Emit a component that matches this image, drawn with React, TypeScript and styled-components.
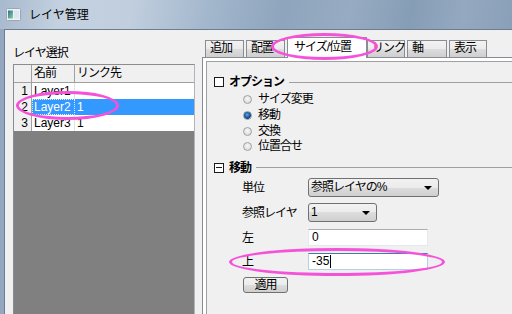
import React from "react";
import styled, { createGlobalStyle, css } from "styled-components";

const Global = createGlobalStyle`
  html, body { margin: 0; padding: 0; background: #f0f0f0; }
  body {
    font-family: "Liberation Sans", "Noto Sans CJK JP", sans-serif;
    font-size: 12px;
    color: #000;
  }
  * { box-sizing: border-box; }
`;

const jp = css`
  letter-spacing: -1px;
`;

const Window = styled.div`
  position: relative;
  width: 512px;
  height: 314px;
  overflow: hidden;
  display: flex;
  flex-direction: column;
  background: #93a8c0;
`;

const TitleBar = styled.div`
  flex: none;
  height: 29px;
  display: flex;
  align-items: center;
  gap: 8px;
  padding-left: 6px;
  background: linear-gradient(
    100deg,
    #a7b9cd 0%,
    #c3d1e0 12%,
    #c0cede 26%,
    #a4b8cd 40%,
    #8ea5bd 55%,
    #97acc2 68%,
    #869db6 80%,
    #94a9c0 90%,
    #8aa0b8 100%
  );
`;

const TitleText = styled.span`
  font-size: 12px;
  line-height: 14px;
  padding-top: 1px;
`;

const Frame = styled.div`
  flex: 1;
  min-height: 0;
  display: flex;
  padding-left: 4px;
`;

const Body = styled.div`
  flex: 1;
  min-width: 0;
  display: flex;
  background: #f0f0f0;
  border-top: 1px solid #6d7d90;
  border-left: 1px solid #6d7d90;
`;

const LeftPane = styled.div`
  flex: none;
  width: 190px;
  display: flex;
  flex-direction: column;
  padding: 16px 0 0 8px;
`;

const PaneLabel = styled.div`
  height: 14px;
  line-height: 14px;
  margin-bottom: 4px;
  ${jp}
`;

const Grid = styled.div`
  flex: 1;
  width: 182px;
  display: flex;
  flex-direction: column;
  background: #808080;
  border: 1px solid #8c8c8c;
  border-right-color: #b4b4b4;
  border-bottom: none;
`;

const GridRow = styled.div<{ $head?: boolean }>`
  display: grid;
  grid-template-columns: 18px 43px 1fr;
  height: ${(p) => (p.$head ? 18 : 16)}px;
  background: #fff;
  ${(p) =>
    p.$head &&
    css`
      background: #f0f0f0;
      border-bottom: 1px solid #a0a0a0;
    `}
`;

const HeadCell = styled.div<{ $last?: boolean }>`
  line-height: 17px;
  padding-left: 2px;
  border-right: ${(p) => (p.$last ? "none" : "1px solid #a0a0a0")};
  ${jp}
`;

const NumCell = styled.div`
  background: #f0f0f0;
  border-right: 1px solid #a0a0a0;
  text-align: right;
  padding-right: 3px;
  line-height: 16px;
`;

const DataCell = styled.div<{ $sel?: boolean; $focus?: boolean; $sep?: boolean }>`
  line-height: 16px;
  padding-left: 2px;
  white-space: nowrap;
  border-right: ${(p) => (p.$sep ? "1px solid #e2e2e2" : "none")};
  ${(p) =>
    p.$sel &&
    css`
      background: #3399ff;
      color: #fff;
    `}
  ${(p) =>
    p.$focus &&
    css`
      outline: 1px dotted #dfeeff;
      outline-offset: -1px;
    `}
`;

const RightPane = styled.div`
  flex: 1;
  min-width: 0;
  display: flex;
  flex-direction: column;
  margin-left: 7px;
  padding-top: 7px;
`;

const TabStrip = styled.div`
  position: relative;
  z-index: 1;
  height: 20px;
  display: flex;
  align-items: flex-end;
  padding-left: 3px;
`;

const Tab = styled.div<{ $w: number; $active?: boolean; $gap?: number }>`
  position: relative;
  flex: none;
  width: ${(p) => p.$w}px;
  height: 17px;
  margin-right: ${(p) => p.$gap ?? 2}px;
  padding-left: 4px;
  line-height: 15px;
  border: 1px solid #898c95;
  border-bottom: none;
  background: linear-gradient(#f2f2f2 0%, #ebebeb 50%, #dddddd 50%, #cfcfcf 100%);
  white-space: nowrap;
  ${jp}
  ${(p) =>
    p.$active &&
    css`
      height: 21px;
      margin-bottom: -1px;
      padding-left: 6px;
      padding-top: 2px;
      background: #fff;
      z-index: 2;
    `}
`;

const Panel = styled.div`
  flex: 1;
  display: flex;
  flex-direction: column;
  background: #fff;
  border-top: 1px solid #898c95;
  border-left: 1px solid #898c95;
  padding: 3px 0 0 3px;
`;

const TreeBox = styled.div`
  flex: 1;
  display: flex;
  flex-direction: column;
  background: #f0f0f0;
  border-top: 1px solid #a0a0a0;
  border-left: 1px solid #a0a0a0;
  padding: 12px 0 0 7px;
`;

const SectionHeader = styled.div<{ $mt?: number }>`
  height: 16px;
  margin-top: ${(p) => p.$mt ?? 0}px;
  display: flex;
  align-items: center;
`;

const Toggle = styled.div<{ $open?: boolean }>`
  position: relative;
  flex: none;
  width: 10px;
  height: 10px;
  border: 1px solid #1a1a1a;
  background: #fff;
  &::after {
    content: "";
    display: ${(p) => (p.$open ? "block" : "none")};
    position: absolute;
    left: 1px;
    top: 3px;
    width: 6px;
    height: 1px;
    background: #1a1a1a;
  }
`;

const SectionTitle = styled.span`
  margin-left: 5px;
  font-weight: bold;
  line-height: 16px;
  ${jp}
`;

const SectionRule = styled.div`
  flex: 1;
  height: 1px;
  margin-left: 5px;
  background: #a0a0a0;
`;

const RadioList = styled.div`
  display: flex;
  flex-direction: column;
  margin-top: 2px;
  padding-left: 29px;
`;

const RadioRow = styled.div`
  height: 15.67px;
  display: flex;
  align-items: center;
  gap: 6px;
`;

const RadioDot = styled.span<{ $on?: boolean }>`
  flex: none;
  width: 9px;
  height: 9px;
  border-radius: 50%;
  border: 1px solid #a2a2a2;
  background: radial-gradient(circle at 50% 40%, #f8f8f8 0%, #dedede 70%, #cccccc 100%);
  ${(p) =>
    p.$on &&
    css`
      border-color: #8a98a8;
      background: radial-gradient(circle at 45% 40%, #6fa3d8 0%, #1b5fa6 45%, #0e3f77 70%, #dfe3e8 72%, #f2f2f2 100%);
    `}
`;

const RadioText = styled.span`
  line-height: 15px;
  ${jp}
`;

const Form = styled.div`
  display: flex;
  flex-direction: column;
  padding-left: 28px;
  margin-top: 2.5px;
`;

const FormRow = styled.div<{ $h: number; $mt?: number }>`
  display: grid;
  grid-template-columns: 66px auto;
  align-items: center;
  height: ${(p) => p.$h}px;
  margin-top: ${(p) => p.$mt ?? 0}px;
`;

const FieldLabel = styled.span`
  line-height: 14px;
  ${jp}
`;

const Select = styled.div<{ $w: number }>`
  position: relative;
  width: ${(p) => p.$w}px;
  height: 19px;
  border: 1px solid #707070;
  border-radius: 3px;
  background: linear-gradient(#f2f2f2 0%, #ebebeb 50%, #dddddd 50%, #cfcfcf 100%);
  padding-left: 2px;
  line-height: 17px;
  white-space: nowrap;
  ${jp}
  &::after {
    content: "";
    position: absolute;
    right: 6px;
    top: 7px;
    border-left: 4px solid transparent;
    border-right: 4px solid transparent;
    border-top: 4px solid #000;
  }
`;

const TextBox = styled.div<{ $focus?: boolean }>`
  width: 120px;
  height: 17px;
  background: #fff;
  border: 1px solid #e3e9ef;
  border-top-color: #abadb3;
  padding-left: 3px;
  line-height: 15px;
  display: flex;
  align-items: center;
  ${(p) =>
    p.$focus &&
    css`
      border-color: #b5cfe7;
      border-top-color: #3d7bad;
    `}
`;

const Caret = styled.span`
  display: inline-block;
  width: 1px;
  height: 13px;
  background: #000;
  margin-left: 1px;
`;

const Button = styled.div`
  width: 45px;
  height: 16px;
  margin-top: 7px;
  margin-left: 1px;
  border: 1px solid #707070;
  border-radius: 3px;
  background: linear-gradient(#f2f2f2 0%, #ebebeb 50%, #dddddd 50%, #cfcfcf 100%);
  text-align: center;
  line-height: 14px;
  ${jp}
`;

const Mark = styled.div`
  position: absolute;
  border: 3px solid #f552d9;
  border-radius: 50%;
  pointer-events: none;
  z-index: 10;
`;

const AppIcon = () => (
  <svg width="15" height="13" viewBox="0 0 15 13">
    <defs>
      <linearGradient id="ig" x1="0" y1="0" x2="1" y2="1">
        <stop offset="0" stopColor="#2b6f8e" />
        <stop offset="1" stopColor="#8fd0a4" />
      </linearGradient>
    </defs>
    <rect x="0.5" y="0.5" width="14" height="12" rx="1" fill="#eef2f6" stroke="#9aa6b4" />
    <rect x="2" y="2.5" width="5" height="8" fill="url(#ig)" />
    <rect x="8" y="2.5" width="5" height="8" fill="#dfe6ee" />
  </svg>
);

const layers = [
  { n: 1, name: "Layer1", link: "" },
  { n: 2, name: "Layer2", link: "1", sel: true },
  { n: 3, name: "Layer3", link: "1" },
];

const tabs = [
  { label: "追加", w: 39 },
  { label: "配置", w: 39 },
  { label: "サイズ/位置", w: 80, active: true, gap: 0 },
  { label: "リンク", w: 38 },
  { label: "軸", w: 40 },
  { label: "表示", w: 38 },
];

const radios = [
  { label: "サイズ変更" },
  { label: "移動", on: true },
  { label: "交換" },
  { label: "位置合せ" },
];

export default function App() {
  return (
    <>
      <Global />
      <Window>
        <TitleBar>
          <AppIcon />
          <TitleText>レイヤ管理</TitleText>
        </TitleBar>
        <Frame>
          <Body>
            <LeftPane>
              <PaneLabel>レイヤ選択</PaneLabel>
              <Grid>
                <GridRow $head>
                  <HeadCell />
                  <HeadCell>名前</HeadCell>
                  <HeadCell $last>リンク先</HeadCell>
                </GridRow>
                {layers.map((l) => (
                  <GridRow key={l.n}>
                    <NumCell>{l.n}</NumCell>
                    <DataCell $sel={l.sel} $focus={l.sel} $sep={!l.sel}>
                      {l.name}
                    </DataCell>
                    <DataCell $sel={l.sel}>{l.link}</DataCell>
                  </GridRow>
                ))}
              </Grid>
            </LeftPane>
            <RightPane>
              <TabStrip>
                {tabs.map((t) => (
                  <Tab key={t.label} $w={t.w} $active={t.active} $gap={t.gap}>
                    {t.label}
                  </Tab>
                ))}
              </TabStrip>
              <Panel>
                <TreeBox>
                  <SectionHeader>
                    <Toggle />
                    <SectionTitle>オプション</SectionTitle>
                    <SectionRule />
                  </SectionHeader>
                  <RadioList>
                    {radios.map((r) => (
                      <RadioRow key={r.label}>
                        <RadioDot $on={r.on} />
                        <RadioText>{r.label}</RadioText>
                      </RadioRow>
                    ))}
                  </RadioList>
                  <SectionHeader $mt={5}>
                    <Toggle $open />
                    <SectionTitle>移動</SectionTitle>
                    <SectionRule />
                  </SectionHeader>
                  <Form>
                    <FormRow $h={19}>
                      <FieldLabel>単位</FieldLabel>
                      <Select $w={131}>参照レイヤの%</Select>
                    </FormRow>
                    <FormRow $h={19} $mt={6}>
                      <FieldLabel>参照レイヤ</FieldLabel>
                      <Select $w={69}>1</Select>
                    </FormRow>
                    <FormRow $h={17} $mt={7}>
                      <FieldLabel>左</FieldLabel>
                      <TextBox>0</TextBox>
                    </FormRow>
                    <FormRow $h={17} $mt={7}>
                      <FieldLabel>上</FieldLabel>
                      <TextBox $focus>
                        -35
                        <Caret />
                      </TextBox>
                    </FormRow>
                    <Button>適用</Button>
                  </Form>
                </TreeBox>
              </Panel>
            </RightPane>
          </Body>
        </Frame>
        <Mark style={{ left: 271, top: 33, width: 107, height: 27 }} />
        <Mark style={{ left: 16, top: 91, width: 103, height: 29 }} />
        <Mark style={{ left: 229, top: 248, width: 216, height: 28 }} />
      </Window>
    </>
  );
}
